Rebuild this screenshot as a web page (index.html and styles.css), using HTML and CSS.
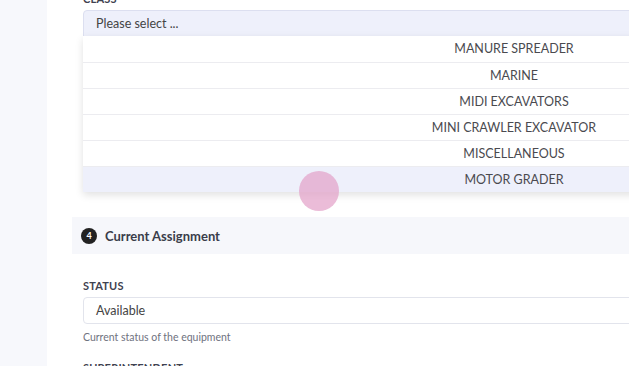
FILE: index.html
```html
<!DOCTYPE html>
<html lang="en">
<head>
  <meta charset="UTF-8" />
  <meta name="viewport" content="width=device-width, initial-scale=1" />
  <title>Equipment</title>
  <link rel="stylesheet" href="styles.css">
</head>
<body>
  <div class="sidebar"></div>

  <div class="main">
    <div class="field class-field">
      <label class="label">Class</label>
      <div class="select open">Please select ...</div>
      <ul class="dropdown">
        <li>MANURE SPREADER</li>
        <li>MARINE</li>
        <li>MIDI EXCAVATORS</li>
        <li>MINI CRAWLER EXCAVATOR</li>
        <li>MISCELLANEOUS</li>
        <li class="hover">MOTOR GRADER</li>
      </ul>
      <span class="touch"></span>
    </div>

    <div class="section-head">
      <span class="step">4</span>
      <h3>Current Assignment</h3>
    </div>

    <div class="field">
      <label class="label">Status</label>
      <div class="select">Available</div>
      <p class="help">Current status of the equipment</p>
    </div>

    <div class="field">
      <label class="label">Superintendent</label>
    </div>
  </div>
</body>
</html>
```

FILE: styles.css
```css
body {
  font-family: 'Lato', 'Open Sans', sans-serif;
  background-color: #fff;
  color: #333;
  margin: 0;
  padding: 0;
  display: flex;
  height: 366px;
  overflow: hidden;
}
.sidebar {
  width: 47px;
  flex-shrink: 0;
  background-color: #f7f8fc;
}
.main {
  flex: 1;
  min-width: 0;
  padding-left: 25px;
  margin-top: -8px;
}
.field {
  position: relative;
  padding-left: 11px;
  width: 900px;
}
.label {
  display: block;
  font-size: 11px;
  font-weight: 700;
  text-transform: uppercase;
  color: #3f4250;
  letter-spacing: 0.2px;
  height: 18px;
  line-height: 14px;
}
.select {
  height: 25px;
  line-height: 25px;
  border: 1px solid #e2e4ec;
  border-radius: 4px;
  padding-left: 12px;
  font-size: 12.5px;
  color: #444;
  background-color: #fff;
}
.select.open {
  background-color: #eef0fb;
  border-color: #dcdff0;
  border-radius: 4px 4px 0 0;
}
.dropdown {
  position: absolute;
  top: 44px;
  left: 11px;
  width: 862px;
  margin: 0;
  padding: 0;
  list-style: none;
  background-color: #fff;
  box-shadow: 0 3px 8px rgba(0, 0, 0, 0.12);
  z-index: 5;
}
.dropdown li {
  box-sizing: border-box;
  height: 26px;
  line-height: 25px;
  text-align: center;
  font-size: 12.5px;
  color: #4a4a4f;
  border-top: 1px solid #ececf0;
}
.dropdown li:first-child {
  border-top: none;
}
.dropdown li.hover {
  background-color: #eef0fb;
}
.touch {
  position: absolute;
  top: 179px;
  left: 227px;
  width: 40px;
  height: 40px;
  border-radius: 50%;
  background-color: rgba(226, 160, 200, 0.7);
  z-index: 6;
}
.section-head {
  display: flex;
  align-items: center;
  gap: 8px;
  margin-top: 180px;
  height: 37px;
  padding-left: 9px;
  background-color: #f6f7fb;
}
.step {
  width: 16px;
  height: 16px;
  border-radius: 50%;
  background-color: #222;
  color: #fff;
  font-size: 9px;
  font-weight: 700;
  display: flex;
  align-items: center;
  justify-content: center;
}
.section-head h3 {
  margin: 0;
  font-size: 13px;
  font-weight: 700;
  color: #3a3d4a;
}
.section-head + .field {
  margin-top: 25px;
}
.help {
  margin: 7px 0 0;
  font-size: 10.5px;
  color: #6f7280;
}
.field + .field {
  margin-top: 18px;
}
```
